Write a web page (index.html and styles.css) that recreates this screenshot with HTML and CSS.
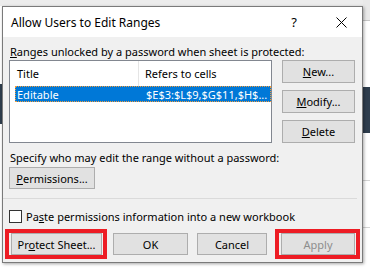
FILE: index.html
```html
<!DOCTYPE html>
<html lang="en">
<head>
  <meta charset="UTF-8" />
  <title>Allow Users to Edit Ranges</title>
  <link rel="stylesheet" href="styles.css">
</head>
<body>
  <div class="dialog">
    <div class="titlebar">
      <span class="title">Allow Users to Edit Ranges</span>
      <span class="help">?</span>
      <svg class="close" width="11" height="11" viewBox="0 0 11 11">
        <path d="M0.5 0.5 L10.5 10.5 M10.5 0.5 L0.5 10.5" stroke="#000" stroke-width="1" fill="none" />
      </svg>
    </div>
    <div class="content">
      <p class="label"><u>R</u>anges unlocked by a password when sheet is protected:</p>
      <div class="ranges">
        <div class="listbox">
          <div class="list-head">
            <span class="col-title">Title</span>
            <span class="col-refs">Refers to cells</span>
          </div>
          <div class="list-row selected">
            <span class="col-title">Editable</span>
            <span class="col-refs">$E$3:$L$9,$G$11,$H$...</span>
          </div>
        </div>
        <div class="side-buttons">
          <button class="btn"><u>N</u>ew...</button>
          <button class="btn"><u>M</u>odify...</button>
          <button class="btn"><u>D</u>elete</button>
        </div>
      </div>
      <p class="label label-who">Specify who may edit the range without a password:</p>
      <button class="btn btn-perm"><u>P</u>ermissions...</button>
    </div>
    <div class="separator"></div>
    <label class="check"><span class="box"></span><span>Pa<u>s</u>te permissions information into a new workbook</span></label>
    <div class="footer">
      <span class="highlight hl-protect"><button class="btn btn-protect">Pr<u>o</u>tect Sheet...</button></span>
      <button class="btn btn-ok">OK</button>
      <button class="btn btn-cancel">Cancel</button>
      <span class="highlight hl-apply"><button class="btn btn-apply" disabled>Apply</button></span>
    </div>
  </div>
</body>
</html>
```

FILE: styles.css
```css
* {
  margin: 0;
  padding: 0;
  box-sizing: border-box;
  font-family: 'Noto Sans', sans-serif;
}
body {
  width: 370px;
  height: 268px;
  overflow: hidden;
  color: #000;
  font-size: 11px;
  background:
    linear-gradient(#2e3d4d, #2e3d4d) 0 84px / 2px 40px no-repeat,
    linear-gradient(#2e3d4d, #2e3d4d) 363px 87px / 7px 46px no-repeat,
    linear-gradient(#c6c6c6, #c6c6c6) 363px 20px / 7px 1px no-repeat,
    linear-gradient(#d4d4d4, #d4d4d4) 363px 180px / 7px 1px no-repeat,
    linear-gradient(#d4d4d4, #d4d4d4) 363px 227px / 7px 1px no-repeat,
    linear-gradient(#e9e9e9, #e9e9e9) 363px 0 / 7px 20px no-repeat,
    linear-gradient(#ececec, #ececec) 0 0 / 100% 6px no-repeat,
    #fff;
}
.dialog {
  width: 361px;
  height: 257px;
  margin: 6px 0 0 2px;
  border: 1px solid #7a7a7a;
  background: #f0f0f0;
  box-shadow: 1px 1px 3px rgba(0,0,0,0.35);
}
.titlebar {
  height: 30px;
  background: #fff;
  display: flex;
  align-items: center;
  padding-left: 8px;
  font-size: 12px;
}
.title {
  flex: 1;
}
.help {
  font-size: 13px;
  margin-right: 39px;
}
.close {
  margin-right: 15px;
}
.content {
  padding: 0 6px;
}
.label {
  line-height: 16px;
  margin-top: 7px;
  padding-left: 1px;
}
.ranges {
  display: flex;
  gap: 10px;
}
.listbox {
  width: 263px;
  height: 83px;
  background: #fff;
  border: 1px solid #828790;
}
.list-head, .list-row {
  display: flex;
}
.list-head {
  height: 25px;
  align-items: center;
}
.list-head .col-title {
  width: 129px;
  padding-left: 7px;
  align-self: stretch;
  display: flex;
  align-items: center;
  border-right: 1px solid #e5e5e5;
}
.list-head .col-refs {
  padding-left: 6px;
}
.list-row {
  height: 16px;
  margin-left: 5px;
  align-items: center;
}
.list-row .col-title {
  width: 124px;
  padding-left: 2px;
}
.list-row .col-refs {
  padding-left: 7px;
}
.selected {
  background: #0078d7;
  color: #fff;
  outline: 1px dotted #f39c3b;
  outline-offset: -1px;
}
.side-buttons {
  display: flex;
  flex-direction: column;
  gap: 7px;
}
.btn {
  font-size: 11px;
  height: 23px;
  background: #e1e1e1;
  border: 1px solid #adadad;
  color: #000;
}
.side-buttons .btn {
  width: 73px;
}
.label-who {
  margin-top: 7px;
}
.btn-perm {
  width: 86px;
  height: 22px;
  margin-top: 1px;
}
.separator {
  height: 1px;
  background: #dadada;
  margin: 9px 5px 0 0;
}
.check {
  display: flex;
  align-items: center;
  height: 13px;
  margin: 11px 0 0 6px;
  gap: 4px;
}
.box {
  width: 13px;
  height: 13px;
  background: #fff;
  border: 1px solid #333;
}
.footer {
  display: flex;
  align-items: flex-start;
  margin: 6px 0 0 2px;
}
.highlight {
  display: flex;
  border: 4px solid #ed1c24;
}
.hl-protect {
  padding: 0 1px 0 2px;
}
.hl-apply {
  padding: 0 1px 0 2px;
  margin-left: 8px;
}
.footer .btn {
  height: 22px;
}
.btn-protect {
  width: 91px;
}
.btn-ok {
  width: 75px;
  margin: 4px 0 0 6px;
}
.btn-cancel {
  width: 70px;
  margin: 4px 0 0 9px;
}
.btn-apply {
  width: 74px;
  color: #8d8d8d;
}
```
